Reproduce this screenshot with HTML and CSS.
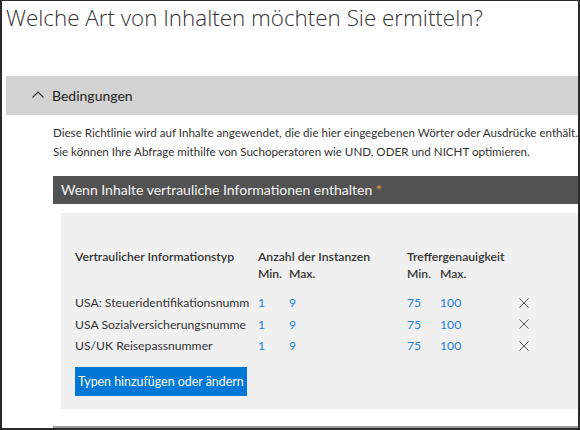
FILE: index.html
```html
<!DOCTYPE html>
<html lang="de">
<head>
<meta charset="utf-8">
<title>Bedingungen</title>
<link rel="stylesheet" href="styles.css">
</head>
<body>
<div class="frame">
  <h1 class="title">Welche Art von Inhalten möchten Sie ermitteln?</h1>
  <div class="section-bar">
    <svg class="chevron" width="12" height="7" viewBox="0 0 12 7"><path d="M0.5 6.5 L6 1 L11.5 6.5" fill="none" stroke="#333" stroke-width="1.1"/></svg>
    <span class="section-label">Bedingungen</span>
  </div>
  <div class="content">
    <p class="desc"><span class="line">Diese Richtlinie wird auf Inhalte angewendet, die die hier eingegebenen Wörter oder Ausdrücke enthält.</span><span class="line">Sie können Ihre Abfrage mithilfe von Suchoperatoren wie UND, ODER und NICHT optimieren.</span></p>
    <div class="cond-header">Wenn Inhalte vertrauliche Informationen enthalten <span class="req">*</span></div>
    <div class="panel">
      <div class="grid">
        <div class="th c1">Vertraulicher Informationstyp</div>
        <div class="th span2">Anzahl der Instanzen</div>
        <div class="th span2">Treffergenauigkeit</div>
        <div></div>
        <div></div>
        <div class="th sub">Min.</div>
        <div class="th sub">Max.</div>
        <div class="th sub">Min.</div>
        <div class="th sub">Max.</div>
        <div></div>

        <div class="td name first">USA: Steueridentifikationsnumm</div>
        <div class="td num first">1</div>
        <div class="td num first">9</div>
        <div class="td num first">75</div>
        <div class="td num first">100</div>
        <div class="td x first"><svg width="10" height="10" viewBox="0 0 10 10"><path d="M0.5 0.5 L9.5 9.5 M9.5 0.5 L0.5 9.5" stroke="#555" stroke-width="1"/></svg></div>

        <div class="td name">USA Sozialversicherungsnumme</div>
        <div class="td num">1</div>
        <div class="td num">9</div>
        <div class="td num">75</div>
        <div class="td num">100</div>
        <div class="td x"><svg width="10" height="10" viewBox="0 0 10 10"><path d="M0.5 0.5 L9.5 9.5 M9.5 0.5 L0.5 9.5" stroke="#555" stroke-width="1"/></svg></div>

        <div class="td name">US/UK Reisepassnummer</div>
        <div class="td num">1</div>
        <div class="td num">9</div>
        <div class="td num">75</div>
        <div class="td num">100</div>
        <div class="td x"><svg width="10" height="10" viewBox="0 0 10 10"><path d="M0.5 0.5 L9.5 9.5 M9.5 0.5 L0.5 9.5" stroke="#555" stroke-width="1"/></svg></div>
      </div>
      <button class="btn">Typen hinzufügen oder ändern</button>
    </div>
    <div class="bottom-line"></div>
  </div>
</div>
</body>
</html>
```
FILE: styles.css
```css
* { box-sizing: border-box; }
html, body { margin: 0; padding: 0; background: #fff; }
body { font-family: Lato, "Open Sans", "Liberation Sans", sans-serif; color: #333; }

.frame {
  width: 580px;
  height: 430px;
  border: 2px solid #2a2a2a;
  border-top-width: 1px;
  overflow: hidden;
  background: #fff;
}

.title {
  margin: 0 0 0 4px;
  padding-top: 1px;
  font-family: "Open Sans", "Liberation Sans", sans-serif;
  font-size: 22.4px;
  font-weight: 300;
  line-height: 32px;
  color: #333;
  white-space: nowrap;
}

.section-bar {
  margin: 42px 0 0 4px;
  height: 39px;
  background: #d2d2d2;
  display: flex;
  align-items: center;
  padding-left: 26px;
}
.chevron { margin-right: 8px; margin-top: -2px; }
.section-label { font-size: 14px; color: #222; }

.content { padding-left: 51px; }

.desc {
  margin: 8px 0 0 0;
  font-size: 11.6px;
  line-height: 19px;
  color: #333;
}
.line { display: block; white-space: nowrap; }

.cond-header {
  margin-top: 15px;
  height: 28px;
  background: #525252;
  color: #f2f2f2;
  font-size: 14px;
  line-height: 28px;
  padding-left: 8px;
  white-space: nowrap;
}
.req { color: #f0a030; }

.panel {
  margin: 9px 0 0 8px;
  height: 196px;
  background: #f0f0f0;
  padding: 35px 0 0 14px;
}

.grid {
  display: grid;
  grid-template-columns: 183px 31px 118px 33px 79px 20px;
  grid-auto-rows: auto;
  align-items: center;
}
.th { font-size: 12.2px; font-weight: 600; line-height: 17px; color: #333; white-space: nowrap; }
.span2 { grid-column: span 2; }
.td { font-size: 12.2px; line-height: 21.5px; height: 21.5px; white-space: nowrap; }
.td.first { margin-top: 10px; }
.name { overflow: hidden; padding-right: 4px; color: #333; }
.num { color: #1e7fd6; }
.x { display: flex; align-items: center; }
.x.first { height: 31.5px; padding-top: 10px; margin-top: 0; }

.btn {
  display: block;
  margin-top: 10px;
  height: 29px;
  padding: 0 3px;
  background: #0078d7;
  border: none;
  color: #fff;
  font-family: Lato, "Open Sans", "Liberation Sans", sans-serif;
  font-size: 12.4px;
}

.bottom-line {
  margin-top: 17px;
  height: 3px;
  background: #9a9a9a;
}
```
